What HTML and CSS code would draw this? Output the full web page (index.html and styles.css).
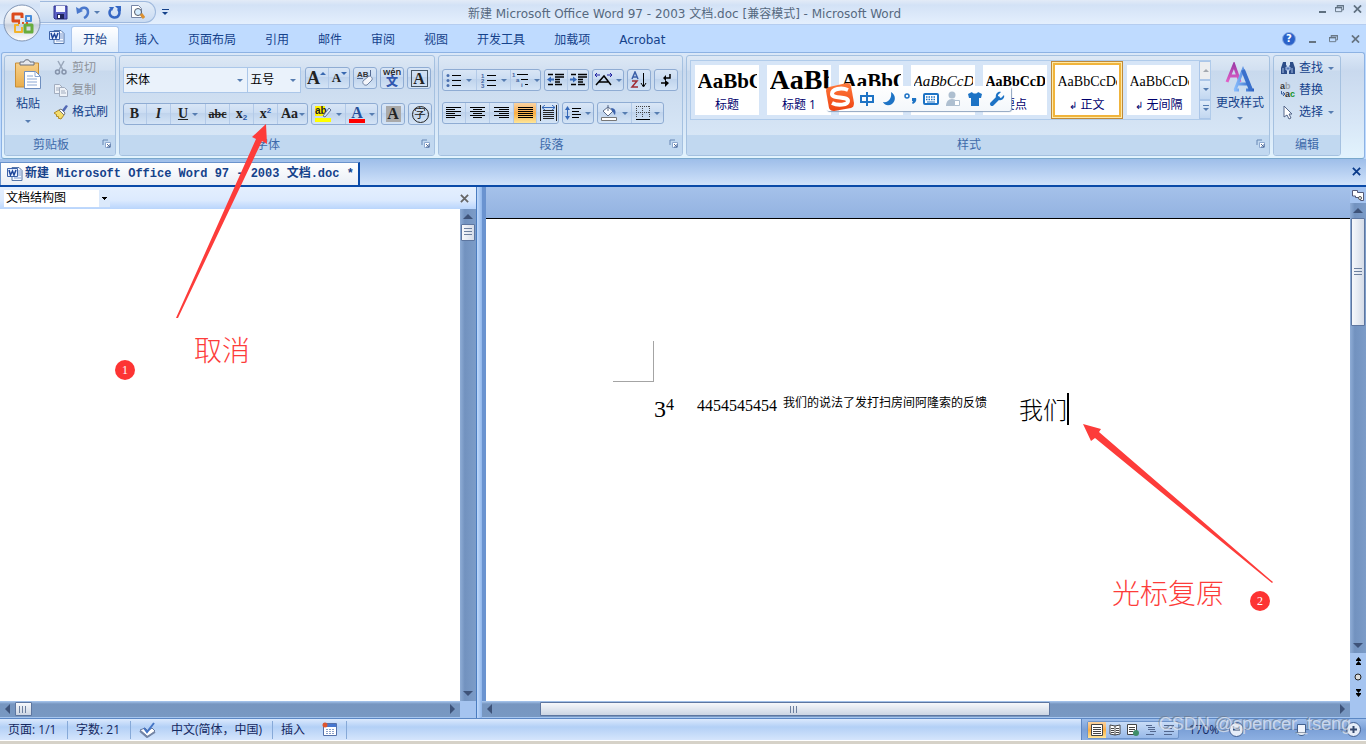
FILE: index.html
```html
<!DOCTYPE html>
<html lang="zh-CN">
<head>
<meta charset="utf-8">
<title>新建 Microsoft Office Word 97 - 2003 文档.doc</title>
<link rel="stylesheet" href="styles.css">
</head>
<body>
<svg class="defs" aria-hidden="true">
<defs>
<linearGradient id="gold" x1="0" y1="0" x2="0" y2="1"><stop offset="0" stop-color="#f7d08a"/><stop offset="1" stop-color="#e9ad4b"/></linearGradient>
<linearGradient id="orb" x1="0" y1="0" x2="0" y2="1"><stop offset="0" stop-color="#fff"/><stop offset=".5" stop-color="#dfe4ec"/><stop offset=".55" stop-color="#c6cfdd"/><stop offset="1" stop-color="#fff"/></linearGradient>
<linearGradient id="sogou" x1="0" y1="0" x2="0" y2="1"><stop offset="0" stop-color="#ff7a3c"/><stop offset="1" stop-color="#ee4312"/></linearGradient>
<linearGradient id="pinkA" x1="0" y1="0" x2="0" y2="1"><stop offset="0" stop-color="#a03ca8"/><stop offset="1" stop-color="#e460c8"/></linearGradient>
<linearGradient id="blueA" x1="0" y1="0" x2="1" y2="0"><stop offset="0" stop-color="#8cc0ff"/><stop offset="1" stop-color="#2a5fc0"/></linearGradient>
</defs>
<symbol id="launch" viewBox="0 0 9 9"><path d="M1 6V1h5" fill="none" stroke="#6787b4"/><path d="M3.500 3.500h5v5h-5z" fill="#fff" stroke="#8ea9cf"/><path d="M5 5l3 3M8 5v3H5" stroke="#4e6d9c" fill="none"/></symbol>
<symbol id="worddoc" viewBox="0 0 16 16"><path d="M5 1.500h7l3 3v10H5z" fill="#f4f8ff" stroke="#5676a8"/><path d="M11 5h3M11 7h3M11 9h3M7 12h7" stroke="#7c9bd0"/><path d="M.5 2.500h10v8H.5z" fill="#e8f0ff" stroke="#3c62a8"/><path d="M2 4l1.500 5L5.500 5 7 9l2-5" fill="none" stroke="#1d4599" stroke-width="1.500"/></symbol>
<symbol id="restore" viewBox="0 0 10 9"><path d="M2.500 3V.5h7v5H7.500M.5 3h7v4.500h-7z" fill="none" stroke="currentColor"/><path d="M0 3h8M2 1h8" stroke="currentColor" stroke-width="1.500"/></symbol>
<symbol id="close" viewBox="0 0 10 9"><path d="M1 .5l8 8M9 .5l-8 8" stroke="currentColor" stroke-width="2" fill="none"/></symbol>
<symbol id="al" viewBox="0 0 15 12"><path d="M0 .5h15M0 2.500h9M0 4.500h15M0 6.500h9M0 8.500h15M0 10.500h9" stroke="#000"/></symbol>
<symbol id="ac" viewBox="0 0 15 12"><path d="M0 .5h15M3 2.500h9M0 4.500h15M3 6.500h9M0 8.500h15M3 10.500h9" stroke="#000"/></symbol>
<symbol id="ar" viewBox="0 0 15 12"><path d="M0 .5h15M5 2.500h10M0 4.500h15M5 6.500h10M0 8.500h15M5 10.500h10" stroke="#000"/></symbol>
<symbol id="aj" viewBox="0 0 15 12"><path d="M0 .5h15M0 2.500h15M0 4.500h15M0 6.500h15M0 8.500h15M0 10.500h15" stroke="#000"/></symbol>
</svg>

<div class="app">
<header class="titlebar">
  <div class="qat">
    <button class="ic" aria-label="保存"><svg width="15" height="15" viewBox="0 0 15 15"><path d="M1 1h13v13H2l-1-1z" fill="#5a5fc4" stroke="#2f328c"/><path d="M3 1h9v6H3z" fill="#f4f6ff"/><path d="M4 9h7v5H4z" fill="#20245c"/><path d="M5 10h2v3H5z" fill="#fff"/></svg></button>
    <button class="ic undo" aria-label="撤销"><svg width="14" height="14" viewBox="0 0 14 14"><path d="M3 6c3-5 9-4 9 1 0 3-2 5-4 6" fill="none" stroke="#4a78cc" stroke-width="2.500"/><path d="M0 2l1 7 6-3z" fill="#4a78cc"/></svg><i class="dd"></i></button>
    <button class="ic" aria-label="重复"><svg width="14" height="14" viewBox="0 0 14 14"><path d="M3 4c-3 4-1 8 3 8.500 5 .5 7-5 4-8.500" fill="none" stroke="#3567c4" stroke-width="2.500"/><path d="M7 1h6v6z" fill="#3567c4"/><path d="M1 2h5L4 6z" fill="#3567c4"/></svg></button>
    <button class="ic" aria-label="打印预览"><svg width="15" height="16" viewBox="0 0 15 16"><path d="M1.500 1.500h7l3 3v9h-10z" fill="#fff" stroke="#7685a5"/><circle cx="8" cy="8" r="3.500" fill="#d4ecff" stroke="#555b68"/><path d="M11 10l3 4" stroke="#dc9130" stroke-width="3"/></svg></button>
  </div>
  <button class="qatmore" aria-label="自定义"><i></i></button>
  <h1>新建 Microsoft Office Word 97 - 2003 文档.doc [兼容模式] - Microsoft Word</h1>
  <div class="winbtns"><button aria-label="最小化"><i class="min"></i></button><button aria-label="还原"><svg width="9" height="8"><use href="#restore"/></svg></button><button aria-label="关闭"><svg width="9" height="8"><use href="#close"/></svg></button></div>
</header>

<nav class="tabs">
  <svg class="tabword" width="16" height="16"><use href="#worddoc"/></svg>
  <a href="#" class="tab on">开始</a><a href="#" class="tab">插入</a><a href="#" class="tab">页面布局</a><a href="#" class="tab">引用</a><a href="#" class="tab">邮件</a><a href="#" class="tab">审阅</a><a href="#" class="tab">视图</a><a href="#" class="tab">开发工具</a><a href="#" class="tab">加载项</a><a href="#" class="tab">Acrobat</a>
  <div class="winbtns docbtns"><button class="help" aria-label="帮助">?</button><button aria-label="最小化"><i class="min"></i></button><button aria-label="还原"><svg width="9" height="8"><use href="#restore"/></svg></button><button aria-label="关闭"><svg width="9" height="8"><use href="#close"/></svg></button></div>
</nav>

<button class="orb" aria-label="Office 按钮"><svg width="40" height="40" viewBox="0 0 40 40"><circle cx="20" cy="20" r="18" fill="url(#orb)" stroke="#8095b5"/><g fill="none" stroke-width="3" stroke-linejoin="round"><path d="M18 18h-7v-7h9v4" stroke="#dc4a1c"/><path d="M23 18h6v-5h-5v4" stroke="#4a8edb" stroke-width="2"/><path d="M17 22h-4v7h7v-5" stroke="#f3b32c" stroke-width="2"/><path d="M23 22h7v7h-7z" stroke="#67ac3c"/></g><path d="M16 20h2M20 20h2M24 20h2" stroke="#d95a25" stroke-width="2"/></svg></button>

<main class="ribbon">
  <section class="group clip"><div class="body">
    <button class="big paste"><svg width="30" height="32" viewBox="0 0 30 32"><path d="M2.500 4h23v24h-23z" fill="url(#gold)" stroke="#c98e35"/><path d="M7 6V3h4c0-3 6-3 6 0h4v3z" fill="#e6e8ec" stroke="#6a6f7b"/><path d="M11.500 12.500h11l5 5v12h-16z" fill="#fff" stroke="#6f8fbf"/><path d="M22 12.500v5h5M14 17h6M14 20h10M14 23h10M14 26h10" fill="none" stroke="#8ca8d4"/></svg><span>粘贴</span><i class="dd"></i></button>
    <div class="stack">
      <button class="row off"><svg width="16" height="16" viewBox="0 0 16 16"><path d="M5 1l5 9M11 1L6 10" stroke="#9aa7ba" stroke-width="1.500"/><circle cx="4.500" cy="12" r="2" fill="none" stroke="#8593ab" stroke-width="1.500"/><circle cx="11" cy="12" r="2" fill="none" stroke="#8593ab" stroke-width="1.500"/></svg>剪切</button>
      <button class="row off"><svg width="16" height="16" viewBox="0 0 16 16"><path d="M1.500 2.500h5l3 3v6h-8z" fill="#eef2f8" stroke="#a2adbf"/><path d="M6.500 5.500h5l3 3v6h-8z" fill="#eef2f8" stroke="#a2adbf"/><path d="M8 9h4M8 11h5M3 6h3M3 8h3" stroke="#a2adbf"/></svg>复制</button>
      <button class="row"><svg width="16" height="16" viewBox="0 0 16 16"><path d="M1 9l5-3 5 5-3 4-3-1 1-1-3-1 1-1z" fill="#f3dc6c" stroke="#b08a28"/><path d="M6 6l2-1 4 4-1 2z" fill="#fff" stroke="#777"/><path d="M9 6l4-5 2 1-4 6z" fill="#5268b4"/></svg>格式刷</button>
    </div></div>
    <footer class="has"><span>剪贴板</span><button aria-label="剪贴板选项"><svg width="9" height="9"><use href="#launch"/></svg></button></footer>
  </section>

  <section class="group font"><div class="body">
    <div class="line">
      <span class="combo face"><select aria-label="字体"><option>宋体</option></select></span><span class="combo size"><select aria-label="字号"><option>五号</option></select></span>
      <div class="set gap1"><button class="w23 s1" aria-label="增大字体"><b class="grow">A</b><svg width="6" height="14" viewBox="0 0 6 14"><path d="M0 4l3-3 3 3z" fill="#3868b0"/></svg></button><button class="w22 s1" aria-label="缩小字体"><b class="shr">A</b><svg width="6" height="14" viewBox="0 0 6 14"><path d="M0 1l3 3 3-3z" fill="#3868b0"/></svg></button></div>
      <div class="set"><button class="w24" aria-label="清除格式"><svg width="18" height="18" viewBox="0 0 18 18"><text x="1" y="8" class="tiny">AB</text><path d="M1 9.500h6M14.500 1v6" stroke="#556b94"/><path d="M7 12l6-5c2 0 4 2 3 4l-5 5c-3 1-5-2-4-4z" fill="#f4f6fb" stroke="#7083a3"/></svg></button></div>
      <div class="set"><button class="w24 pin" aria-label="拼音指南"><span>wén</span><b>文</b></button></div>
      <div class="set"><button class="w24" aria-label="字符边框"><b class="boxed">A</b></button></div>
    </div>
    <div class="line l2">
      <div class="set"><button class="w23 ser"><b>B</b></button><button class="w24 ser"><em>I</em></button><button class="w35 ser"><u>U</u><i class="dd"></i></button><button class="w24 ser abc"><s>abc</s></button><button class="w24 ser"><b>x<sub>2</sub></b></button><button class="w24 ser"><b>x<sup>2</sup></b></button><button class="w31 ser aa">Aa<i class="dd"></i></button></div>
      <div class="set"><button class="w34" aria-label="突出显示"><svg width="18" height="18" viewBox="0 0 18 18"><path d="M1 1h10v10H1z" fill="#fff200"/><text x="1" y="9" class="ab">ab</text><path d="M9 11l6-8 2 2-6 7z" fill="#dce8f8" stroke="#5e7398"/><path d="M1 13h16v4H1z" fill="#ff0"/></svg><i class="dd"></i></button><button class="w33 fcol" aria-label="字体颜色"><b>A</b><i class="dd"></i></button></div>
      <div class="set"><button class="w24" aria-label="字符底纹"><b class="shade">A</b></button></div>
      <div class="set"><button class="w24" aria-label="带圈字符"><span class="circ">字</span></button></div>
    </div></div>
    <footer class="has"><span>字体</span><button aria-label="字体选项"><svg width="9" height="9"><use href="#launch"/></svg></button></footer>
  </section>

  <section class="group para"><div class="body">
    <div class="line">
      <div class="set"><button class="w34" aria-label="项目符号"><svg width="16" height="15" viewBox="0 0 16 15"><path d="M6 2.500h9M6 7.500h9M6 12.500h9" stroke="#000"/><g fill="#4a6fae"><circle cx="2" cy="2.500" r="1.500"/><circle cx="2" cy="7.500" r="1.500"/><circle cx="2" cy="12.500" r="1.500"/></g></svg><i class="dd"></i></button><button class="w34" aria-label="编号"><svg width="16" height="15" viewBox="0 0 16 15"><path d="M6 2.500h9M6 7.500h9M6 12.500h9" stroke="#000"/><text x="0" y="5" class="num6">1</text><text x="0" y="10" class="num6">2</text><text x="0" y="15" class="num6">3</text></svg><i class="dd"></i></button><button class="w31" aria-label="多级列表"><svg width="18" height="16" viewBox="0 0 18 16"><path d="M5 2.500h11M9 7.500h7M13 12.500h3" stroke="#000"/><text x="0" y="5" class="num6">1</text><text x="4" y="10" class="num6">a</text><text x="9" y="15" class="num6">i</text></svg><i class="dd"></i></button></div>
      <div class="set"><button class="w23" aria-label="减少缩进"><svg width="17" height="14" viewBox="0 0 17 14"><path d="M1 1.500h5M8 1.500h9M8 4h9M8 6.500h5M8 9h5M1 11.500h5M8 11.500h7" stroke="#000" stroke-width="1.500"/><path d="M0 6.500l4-3v2h3v2H4v2z" fill="#3568b8"/></svg></button><button class="w22" aria-label="增加缩进"><svg width="17" height="14" viewBox="0 0 17 14"><path d="M1 1.500h5M8 1.500h9M8 4h9M8 6.500h5M8 9h5M1 11.500h5M8 11.500h7" stroke="#000" stroke-width="1.500"/><path d="M7 6.500l-4-3v2H0v2h3v2z" fill="#3568b8"/></svg></button></div>
      <div class="set"><button class="w32" aria-label="中文版式"><svg width="17" height="16" viewBox="0 0 17 16"><path d="M1 13l8-9 7 9M4 10h9" stroke="#000" stroke-width="1.500" fill="none"/><path d="M0 3h5M2 1l-2 2 2 2M17 3h-5M15 1l2 2-2 2" fill="none" stroke="#2020a0"/></svg><i class="dd"></i></button></div>
      <div class="set"><button class="w24" aria-label="排序"><svg width="18" height="18" viewBox="0 0 18 18"><path d="M2 8l3-7 3 7M3 6h4" fill="none" stroke="#3c60a8" stroke-width="1.500"/><path d="M2 10h5l-5 6h6" fill="none" stroke="#a02c34" stroke-width="1.500"/><path d="M13.500 2v13M11 12l2.500 4 2.500-4" fill="none" stroke="#000"/></svg></button></div>
      <div class="set"><button class="w24" aria-label="显示编辑标记"><svg width="14" height="16" viewBox="0 0 14 16"><path d="M11 2v4H5M2 11h7" stroke="#000" stroke-width="1.500" fill="none"/><path d="M7 3L4 6l3 3zM6 8l4 3-4 4z"/></svg></button></div>
    </div>
    <div class="line l2">
      <div class="set"><button class="w23" aria-label="左对齐"><svg width="15" height="12"><use href="#al"/></svg></button><button class="w24" aria-label="居中"><svg width="15" height="12"><use href="#ac"/></svg></button><button class="w24" aria-label="右对齐"><svg width="15" height="12"><use href="#ar"/></svg></button><button class="w23 lit" aria-label="两端对齐"><svg width="15" height="12"><use href="#aj"/></svg></button><button class="w23" aria-label="分散对齐"><svg width="17" height="16" viewBox="0 0 17 16"><path d="M.5 0v16M16.500 0v16M3 5.500h11M3 7.500h11M3 9.500h11M3 11.500h11M3 13.500h11" stroke="#222"/><path d="M2 2.500h13M5 0L2 2.500 5 5M12 0l3 2.500L12 5" stroke="#3568b8" fill="none"/></svg></button></div>
      <div class="set"><button class="w32" aria-label="行距"><svg width="16" height="16" viewBox="0 0 16 16"><path d="M7 3.500h9M7 6.500h7M7 9.500h9M7 12.500h7" stroke="#000"/><path d="M0 5l2.500-4L5 5zM0 11l2.500 4L5 11z" fill="#3568b8"/><path d="M2.500 4v8" stroke="#3568b8"/></svg><i class="dd"></i></button></div>
      <div class="set"><button class="w34" aria-label="底纹"><svg width="18" height="16" viewBox="0 0 18 16"><path d="M3 6l5-4 5 4-5 5z" fill="#fff" stroke="#5a6a88"/><path d="M8 0v6" stroke="#5a6a88"/><path d="M11 3c5 0 5 4 4 7-2-1-1-3-3-4z" fill="#3c62ac"/><path d="M1.500 12.500h15v3h-15z" fill="#fff" stroke="#777"/></svg><i class="dd"></i></button><button class="w33" aria-label="边框"><svg width="14" height="14" viewBox="0 0 14 14"><path d="M.5 0v12M6.500 0v12M13.500 0v12M0 .5h14M0 6.500h14" stroke="#444" stroke-dasharray="1 1"/><path d="M0 13.500h14" stroke="#000"/></svg><i class="dd"></i></button></div>
    </div></div>
    <footer class="has"><span>段落</span><button aria-label="段落选项"><svg width="9" height="9"><use href="#launch"/></svg></button></footer>
  </section>

  <section class="group styles"><div class="body">
    <div class="gallery">
      <button class="tile"><span class="smp h20">AaBbCc</span><span>标题</span></button>
      <button class="tile"><span class="smp h27">AaBbC</span><span>标题 1</span></button>
      <button class="tile"><span class="smp h20">AaBbCc</span><span>副标题</span></button>
      <button class="tile"><span class="smp it">AaBbCcDd</span><span>强调</span></button>
      <button class="tile"><span class="smp bd">AaBbCcD</span><span>要点</span></button>
      <button class="tile sel"><span class="smp">AaBbCcDd</span><span><small>↲</small> 正文</span></button>
      <button class="tile"><span class="smp">AaBbCcDd</span><span><small>↲</small> 无间隔</span></button>
      <div class="gscroll"><button class="dis" aria-label="上一行"><i class="up"></i></button><button aria-label="下一行"><i class="dd"></i></button><button aria-label="更多"><i class="dd more"></i></button></div>
    </div>
    <button class="big change"><svg width="30" height="30" viewBox="0 0 30 30"><path d="M2 20L9 3l6 17M4 14h8" fill="none" stroke="url(#pinkA)" stroke-width="3"/><path d="M9 28h5M10 28L18 8l8 20M21 28h8M13 22h9" fill="none" stroke="url(#blueA)" stroke-width="3"/><path d="M18 8l8 20" stroke="#3a70cc" stroke-width="4"/></svg><span>更改样式</span><i class="dd"></i></button></div>
    <footer class="has"><span>样式</span><button aria-label="样式选项"><svg width="9" height="9"><use href="#launch"/></svg></button></footer>
  </section>

  <section class="group edit"><div class="body"><div class="stack">
      <button class="row"><svg width="16" height="16" viewBox="0 0 16 16"><path d="M3 2h3v3l1 1v8H1V8zM10 2h3l2 6v6H9V6l1-1z" fill="#2d4d88"/><path d="M6 7h4v3H6zM3 8v5M12 8v5" fill="#5878b4" stroke="#a9c0e6"/></svg>查找<i class="dd"></i></button>
      <button class="row"><svg width="16" height="16" viewBox="0 0 16 16"><text x="0" y="7" class="rp">a<tspan class="g">b</tspan></text><text x="5" y="15" class="rp">a<tspan class="gr">c</tspan></text><path d="M1.500 9v3H5M3 10l2 2-2 2" fill="none" stroke="#3a5f9f"/></svg>替换</button>
      <button class="row"><svg width="16" height="16" viewBox="0 0 16 16"><path d="M4 2v11l3-2 2 4 2-1-2-4h3z" fill="#fff" stroke="#54668a"/></svg>选择<i class="dd"></i></button>
    </div></div>
    <footer><span>编辑</span></footer>
  </section>
</main>

<div class="doctabs"><a href="#" class="doctab"><svg width="16" height="16"><use href="#worddoc"/></svg>新建 Microsoft Office Word 97 - 2003 文档.doc *</a><button aria-label="关闭文档"><svg width="9" height="9"><use href="#close"/></svg></button></div>

<div class="work">
  <aside class="map">
    <div class="maphead"><span class="mapsel"><select aria-label="窗格"><option>文档结构图</option></select></span><button aria-label="关闭窗格"><svg width="9" height="9"><use href="#close"/></svg></button></div>
    <div class="mapbody"><div class="blank"></div><div class="vs"><i class="t up"></i><b class="thumb"></b><i class="t down"></i></div></div>
    <div class="hs"><i class="t left"></i><b class="thumb tsm"></b><i class="t right"></i><span class="corner"></span></div>
  </aside>
  <div class="split"></div>
  <section class="doc">
    <div class="docmain">
      <div class="canvas"><article class="page"><div class="mark"></div><p class="text"><span class="n">3<sup>4</sup></span><span class="num">4454545454</span><span class="small">我们的说法了发打扫房间阿隆索的反馈</span><span class="end">我们</span></p></article></div>
      <div class="side"><button class="ruler" aria-label="标尺"><svg width="14" height="13" viewBox="0 0 14 13"><path d="M1.500 1.500h5v2h6v8h-3v-3h-5V7h-3z" fill="#fff" stroke="#555b7a"/><circle cx="9" cy="9" r="1.500" fill="#fff" stroke="#555"/></svg></button>
      <div class="vs"><i class="t up"></i><b class="thumb tall"></b><i class="t down"></i></div>
      <div class="browse"><button aria-label="上一页"><svg width="7" height="8" viewBox="0 0 7 8"><path d="M1 3l2.500-3L6 3zM1 7l2.500-3L6 7z"/><path d="M1 3.500h5M1 7.500h5" stroke="#000"/></svg></button><button aria-label="选择浏览对象"><svg width="8" height="8" viewBox="0 0 8 8"><circle cx="4" cy="4" r="3" fill="#ddd" stroke="#222"/></svg></button><button aria-label="下一页"><svg width="7" height="8" viewBox="0 0 7 8"><path d="M1 1h5L3.500 4zM1 5h5L3.500 8z"/><path d="M1 .5h5M1 4.500h5" stroke="#000"/></svg></button></div></div>
    </div>
    <div class="hs"><i class="t left"></i><b class="thumb twide"></b><i class="t right"></i><span class="corner"></span></div>
  </section>
</div>

<footer class="status">
  <span class="c1">页面: 1/1</span><span class="c2">字数: 21</span><span class="c3"><svg width="17" height="16" viewBox="0 0 17 16"><path d="M1 8l5-2 3 3 4-3 3 3-7 6z" fill="#fff" stroke="#66789d"/><path d="M1 9l7 6 8-5" fill="none" stroke="#7485a5" stroke-width="2"/><path d="M5 6l3 4 7-9" fill="none" stroke="#4474c4" stroke-width="2"/></svg></span><span class="c4">中文(简体，中国)</span><span class="c5">插入<svg width="16" height="15" viewBox="0 0 16 15"><path d="M1.500 1.500h13v12h-13z" fill="#fff" stroke="#5470a8"/><path d="M2 2h12v3H2z" fill="#4676d0"/><path d="M4 7.500h9M4 9.500h9M4 11.500h9" stroke="#8ba0c8" stroke-dasharray="2 1"/><circle cx="3" cy="3" r="2.500" fill="#dc5530"/></svg></span>
  <div class="zoombar">
    <div class="views"><button class="lit" aria-label="页面视图"><svg width="12" height="12" viewBox="0 0 12 12"><path d="M.5.5h11v11H.5z" fill="#fff" stroke="#444"/><path d="M2 3.500h8M2 5.500h8M2 7.500h8M2 9.500h8" stroke="#444"/></svg></button><button aria-label="阅读版式"><svg width="12" height="12" viewBox="0 0 12 12"><path d="M1 1l5 1 5-1v9l-5 1-5-1zM6 2v9" fill="#fff" stroke="#444"/><path d="M2 4.500h3M2 6.500h3M7 4.500h3M7 6.500h3M2 8.500h3M7 8.500h3" stroke="#444"/></svg></button><button aria-label="Web 版式"><svg width="12" height="12" viewBox="0 0 12 12"><path d="M.5.5h9v10h-9z" fill="#fff" stroke="#444"/><path d="M2 3.500h6M2 5.500h6M2 7.500h4" stroke="#444"/><circle cx="9" cy="9" r="3" fill="#3f8e68"/></svg></button><button aria-label="大纲"><svg width="12" height="12" viewBox="0 0 12 12"><path d="M1 1.500h6M3 3.500h7M3 5.500h7M5 7.500h6M1 10.500h8" stroke="#52678e"/></svg></button><button aria-label="草稿"><svg width="12" height="12" viewBox="0 0 12 12"><path d="M1 1.500h10M1 4.500h8M1 7.500h10M1 10.500h8" stroke="#52678e"/></svg></button></div>
    <span class="pct">170%</span><button class="zb" aria-label="缩小"><svg width="13" height="13" viewBox="0 0 13 13"><path d="M3 6.500h7" stroke="#34496f" stroke-width="2"/></svg></button><input type="range" aria-label="显示比例" min="0" max="100" value="57"><button class="zb" aria-label="放大"><svg width="13" height="13" viewBox="0 0 13 13"><path d="M3 6.500h7M6.500 3v7" stroke="#34496f" stroke-width="2"/></svg></button>
  </div>
</footer>
<div class="edge"></div>

<div class="ime"><svg class="slogo" width="30" height="30" viewBox="0 0 30 30"><path d="M4 5l18-4q3 0 4 3l3 17q0 4-3 5L9 29q-4 0-5-3L1 9q0-3 3-4z" fill="url(#sogou)"/><path d="M23 8C16 5 7 7 7 12c0 5 16 2 16 7 0 4-10 5-16 2" fill="none" stroke="#fff" stroke-width="4"/></svg>
  <svg width="16" height="16" viewBox="0 0 16 16"><path d="M2 5h12v6H2zM8 1v14" fill="none" stroke="#1d73c5" stroke-width="2"/></svg>
  <svg width="16" height="16" viewBox="0 0 16 16"><path d="M10 1c5 3 5 9 1 12-3 2-7 2-9-2 6 1 9-4 8-10z" fill="#1d73c5"/></svg>
  <svg width="14" height="16" viewBox="0 0 14 16"><circle cx="4" cy="5" r="2" fill="none" stroke="#1d73c5" stroke-width="1.500"/><path d="M9 7h4c1 3-1 5-3 6l-1-1 1-2H9z" fill="#1d73c5"/></svg>
  <svg width="16" height="14" viewBox="0 0 16 14"><rect x="1" y="2" width="14" height="10" rx="1" fill="#fff" stroke="#1d73c5" stroke-width="2"/><path d="M3 5h10M3 7.500h10" stroke="#1d73c5" stroke-width="1.500" stroke-dasharray="1.500 1"/><path d="M4 10h8" stroke="#1d73c5"/></svg>
  <svg width="16" height="16" viewBox="0 0 16 16"><circle cx="7" cy="4" r="3.500" fill="#aebfd0"/><path d="M1 15c0-4 2-7 6-7s6 3 6 7z" fill="#aebfd0"/><path d="M9.500 9.500h5v5h-5z" fill="#fff" stroke="#aebfd0"/></svg>
  <svg width="16" height="16" viewBox="0 0 16 16"><path d="M1 3l4-2c1 2 5 2 6 0l4 2-1 4h-2v8H4V7H2z" fill="#1d73c5"/></svg>
  <svg width="16" height="16" viewBox="0 0 16 16"><path d="M3 13l6-6" stroke="#1d73c5" stroke-width="4" stroke-linecap="round"/><path d="M12 1C9 0 6 3 7 7l3 2c3 1 6-2 5-5l-3 3-3-1V4z" fill="#1d73c5"/></svg>
</div>

<svg class="arrows" aria-hidden="true"><path d="M266 124L252 137 256 139 176 318 178 318 262 141 267 144z"/><path d="M1083 424L1091 441 1095 438 1272 583 1273 582 1099 432 1101 429z"/></svg>
<span class="note n1">取消</span><span class="dot d1">1</span><span class="note n2">光标复原</span><span class="dot d2">2</span>
<span class="mark2">CSDN @spencer_tseng</span>
</div>
</body>
</html>
```
FILE: styles.css
```css
* { box-sizing: border-box; }
body { margin: 0; font: 12px/16px "Open Sans", "Noto Sans CJK SC", sans-serif; color: #15428b; overflow: hidden; }
button, select, input { font: inherit; color: inherit; margin: 0; padding: 0; border: 0; background: none; border-radius: 0; }
a { color: inherit; text-decoration: none; }
svg { display: block; flex: none; }
.defs { position: absolute; width: 0; height: 0; }
.app { position: relative; display: flex; flex-direction: column; height: 100vh; background: #bfdbff; }

.titlebar { display: flex; align-items: center; height: 25px; flex: none; padding: 0 4px 0 40px; background: linear-gradient(#e3ebf7 0, #d3e2f6 5px, #e4effd 100%); border-bottom: 1px solid #b5cdf0; }
.qat { display: flex; align-items: center; gap: 8px; height: 22px; width: 116px; padding-left: 13px; background: linear-gradient(#e4edf8, #c9dbf2); border: 1px solid #9fb9dd; border-left: 0; border-radius: 0 11px 11px 0; }
.ic { display: flex; align-items: center; gap: 4px; }
.dd { display: block; flex: none; width: 0; border: 3px solid transparent; border-top-color: #567db1; border-bottom: 0; }
.qatmore { width: 10px; margin-left: 4px; }
.qatmore i { display: block; width: 7px; height: 6px; margin: 0 auto; border-top: 1px solid #15428b; }
.qatmore i::after { content: ""; display: block; margin-top: 2px; width: 0; border: 3px solid transparent; border-top-color: #15428b; border-bottom: 0; }
h1 { flex: 1; margin: 0; text-align: center; font: 400 12px/16px "DejaVu Sans", "Noto Sans CJK SC", sans-serif; color: #56697f; padding: 3px 120px 0 0; white-space: nowrap; }
.winbtns { display: flex; align-items: center; gap: 9px; padding-bottom: 6px; color: #5f7080; }
.min { display: block; width: 7px; height: 2px; background: currentColor; margin-top: 6px; }

.tabs { display: flex; align-items: flex-end; height: 27px; flex: none; padding: 0 6px 0 49px; font-family: "DejaVu Sans", "Noto Sans CJK SC", sans-serif; }
.tabword { margin: 0 6px 7px 0; }
.tab { padding: 5px 14px 4px; line-height: 16px; margin-right: 1px; }
.tab.on { padding: 5px 11px 4px; margin-right: 2px; border: 1px solid #a9c5ec; border-bottom: 0; border-radius: 3px 3px 0 0; background: linear-gradient(#fff, #dfecfb); }
.docbtns { margin: 0 0 6px auto; padding: 0; gap: 13px; color: #667380; }
.help { width: 14px; height: 14px; border-radius: 7px; background: #2b62c9; color: #fff; font-size: 10px; line-height: 12px; font-weight: 700; border: 1px solid #8daee4; }
.orb { position: absolute; left: 2px; top: 3px; }

.ribbon { display: flex; gap: 3px; height: 107px; flex: none; margin: 0 1px; padding: 2px; border: 1px solid #8db2e3; border-radius: 3px; background: linear-gradient(#dbe8f8 0, #c9d9ee 18px, #d8e7f7 70px, #e2f3fd 100%); border-bottom-color: #79a8cc; }
.group { display: flex; flex: none; flex-direction: column; border: 1px solid #a5c1e0; border-radius: 3px; background: linear-gradient(#dde8f5 0, #d2e0f1 14px, #c8d9ed 15px, #d7e6f6 80px); }
.group .body { flex: 1; display: flex; padding: 0 3px; min-height: 0; }
.group footer { position: relative; height: 20px; flex: none; background: #c1d8f0; text-align: center; line-height: 20px; color: #3e6aaa; border-radius: 0 0 2px 2px; }
.group footer.has { padding-right: 18px; }
.group footer button { position: absolute; right: 4px; top: 4px; }
.clip { width: 112px; } .font { width: 316px; } .para { width: 245px; } .edit { width: 68px; margin-right: 21px; }
.group.styles { flex: 1; min-width: 0; }
.font .body, .para .body { flex-direction: column; }
.big { display: flex; flex-direction: column; align-items: center; line-height: 16px; }
.paste { width: 40px; flex: none; padding-top: 3px; gap: 5px; }
.paste .dd, .change .dd { margin-top: 3px; }
.stack { display: flex; flex-direction: column; gap: 4px; padding: 3px 0 0 5px; }
.row { display: flex; align-items: center; gap: 3px; height: 18px; white-space: nowrap; }
.row .dd { margin-left: 2px; }
.off { color: #8d9299; }
.line { display: flex; gap: 3px; padding-top: 11px; height: 47px; flex: none; align-items: flex-start; }
.para .line { padding-top: 13px; height: 46px; }
.group .l2 { padding-top: 0; height: 22px; }
.combo, .mapsel { position: relative; display: block; background: #eaf2fb; border: 1px solid #abc7e9; height: 26px; }
.combo select, .mapsel select { appearance: none; width: 100%; height: 100%; padding-left: 2px; color: #000; outline: 0; }
.combo::after, .mapsel::after { content: ""; position: absolute; right: 4px; top: 11px; border: 3px solid transparent; border-top-color: #567db1; border-bottom: 0; pointer-events: none; }
.face { width: 126px; } .size { width: 54px; margin-left: -4px; }
.gap1 { margin-left: 1px; }
.set { display: flex; height: 22px; border: 1px solid #8facd3; border-radius: 3px; background: linear-gradient(#d9e6f6 0, #cadcf2 45%, #bfd3ec 46%, #d4e4f6 100%); }
.set button { display: flex; align-items: center; justify-content: center; gap: 4px; color: #222; }
.set button + button { border-left: 1px solid #b3cae8; }
.set button:first-child { margin-left: -1px; } .set button:last-child { margin-right: -1px; }
.w22 { width: 22px; } .w23 { width: 23px; } .w24 { width: 24px; } .w31 { width: 31px; } .w32 { width: 32px; } .w33 { width: 33px; } .w34 { width: 34px; } .w35 { width: 35px; }
.ser, .grow, .shr, .boxed, .shade, .fcol b { font-family: "Liberation Serif", serif; font-weight: 700; }
.ser { font-size: 14px; }
.ser sub, .ser sup { font: 700 8px/8px "Liberation Sans", sans-serif; color: #2858a8; }
.ser sub { vertical-align: -2px; } .ser sup { vertical-align: 5px; }
.set .abc { font-size: 12px; } .set .aa { gap: 1px; font-size: 14px; }
.set .s1 { gap: 0; } .grow { font-size: 18px; line-height: 20px; } .shr { font-size: 13px; line-height: 20px; }
.s1 svg { align-self: flex-start; margin-top: 3px; }
.tiny { font: 700 8px "Liberation Sans", sans-serif; fill: #333; }
.num6 { font: 700 6px "Liberation Sans", sans-serif; fill: #4264a0; }
.ab { font: 700 10px "Liberation Sans", sans-serif; fill: #222; }
.rp { font: 700 9px "Liberation Sans", sans-serif; fill: #333; } .g { fill: #9aa0a8; } .gr { fill: #17942a; }
.set .pin { flex-direction: column; gap: 0; font-size: 9px; font-weight: 600; line-height: 8px; } .pin b { font-size: 12px; line-height: 12px; color: #3158b0; }
.boxed { width: 17px; height: 17px; border: 1px solid #456; line-height: 16px; font-size: 16px; }
.shade { width: 15px; height: 16px; background: #a9a9a9; line-height: 16px; font-size: 16px; }
.fcol b { width: 16px; height: 17px; border-bottom: 4px solid #f00; font-size: 16px; line-height: 13px; color: #264f9a; }
.circ { width: 17px; height: 17px; border: 1px solid #222; border-radius: 50%; font-size: 12px; line-height: 14px; }
.lit { background: linear-gradient(#f9d3a2 0, #fbb45c 40%, #f9ae42 50%, #fee69a 100%); }

.gallery { display: flex; gap: 8px; height: 60px; margin: 4px 1px 0 0; padding-left: 4px; border: 1px solid #b0cbea; background: #d6e5f7; flex: 1; align-items: center; min-width: 0; overflow: hidden; }
.tile { width: 64px; height: 50px; flex: none; background: #fff; display: flex; flex-direction: column; align-items: center; color: #00006d; line-height: 18px; }
.tile small { font-size: 10px; }
.smp { width: 59px; height: 31px; overflow: hidden; text-align: left; font: 14px/33px "Liberation Serif", serif; color: #000; white-space: nowrap; }
.h20 { font-size: 21px; font-weight: 700; } .h27 { font-size: 28px; line-height: 29px; font-weight: 700; } .it { font-style: italic; font-size: 15px; } .bd { font-weight: 700; }
.sel { outline: 2px solid #f0b43c; box-shadow: 0 0 0 3px #ffeaa8, 0 0 0 4px #c08a3a; }
.gscroll { display: flex; flex-direction: column; flex: none; margin-left: auto; width: 14px; height: 100%; }
.gscroll button { flex: 1; display: flex; align-items: center; justify-content: center; background: linear-gradient(#e0ecfa, #c2d7f0); border: 1px solid #abc6e8; }
.gscroll .dis { background: #eceef0; }
.gscroll .up { width: 0; border: 3px solid transparent; border-bottom-color: #a4a9b0; border-top: 0; }
.more { position: relative; } .more::before { content: ""; position: absolute; left: -3px; top: -6px; width: 6px; height: 1px; background: #567db1; }
.change { width: 56px; flex: none; padding-top: 6px; gap: 3px; white-space: nowrap; }
.styles .body { padding: 0 1px 0 3px; }
.edit .body { padding: 0; } .edit .stack { padding-left: 6px; }

.doctabs { display: flex; height: 28px; flex: none; align-items: center; background: linear-gradient(#9ebee9, #d0e2fa); border-bottom: 2px solid #0a4aa8; padding: 3px 5px 0 0; }
.doctab { display: flex; align-items: center; gap: 2px; align-self: stretch; width: 360px; flex: none; padding-left: 6px; background: linear-gradient(#fff, #e9eef6); border: 1px solid #6a93cc; border-right: 2px solid #0a4aa8; border-bottom: 0; font: 700 12px/16px "Liberation Mono", "Noto Sans CJK SC", monospace; white-space: nowrap; }
.doctabs button { margin: 0 0 4px auto; color: #0a3a8a; }

.work { flex: 1; display: flex; min-height: 0; }
.map { width: 35%; max-width: 477px; display: flex; flex-direction: column; flex: none; border-right: 1px solid #4a7cc0; }
.maphead { display: flex; justify-content: space-between; align-items: center; height: 22px; flex: none; padding: 0 7px 0 4px; background: linear-gradient(#e4effe 0, #dceafe 60%, #b9d5fc 100%); color: #666; }
.mapsel { width: 106px; height: 17px; background: #fff; border: 0; }
.mapsel::after { top: 0; right: 0; border: 0; width: 11px; height: 17px; background: linear-gradient(#000, #000) center 7px/5px 1px no-repeat, linear-gradient(#000, #000) center 8px/3px 1px no-repeat, linear-gradient(#000, #000) center 9px/1px 1px no-repeat, #dbe9fb; }
.mapbody { flex: 1; display: flex; background: #fff; min-height: 0; }
.blank { flex: 1; }
.vs { display: flex; flex-direction: column; align-items: center; width: 16px; padding: 5px 0; background: linear-gradient(90deg, #8fadd6, #7292bf 30%, #7c9cc8); }
.hs { display: flex; align-items: center; height: 17px; flex: none; padding-left: 5px; background: linear-gradient(#a9c8f0 0, #7796c0 3px, #7898c2 100%); border-bottom: 1px solid #a6c6f0; }
.t { display: block; width: 0; flex: none; border: 5px solid transparent; }
.t.up { border-bottom-color: #3e5379; border-top: 0; } .t.down { border-top-color: #3e5379; border-bottom: 0; margin-top: auto; }
.t.left { border-right-color: #3e5379; border-left: 0; } .t.right { border-left-color: #3e5379; border-right: 0; margin-left: auto; }
.thumb { display: block; flex: none; width: 14px; height: 17px; margin-top: 5px; border: 1px solid #5d76a0; border-radius: 1px; background: repeating-linear-gradient(#6c7f9e 0 1px, transparent 1px 3px) center/8px 9px no-repeat, linear-gradient(90deg, #f6f8fb, #d5dce8); }
.tall { height: 108px; }
.hs .thumb { margin: 0 0 0 5px; width: 17px; height: 14px; background: repeating-linear-gradient(90deg, #6c7f9e 0 1px, transparent 1px 3px) center/9px 7px no-repeat, linear-gradient(#f6f8fb, #ccd5e3); }
.hs .twide { width: 58%; margin-left: 48px; }
.corner { width: 16px; align-self: stretch; margin-left: 5px; background: #a5c4f0; flex: none; }
.split { width: 5px; flex: none; background: linear-gradient(90deg, #c0dafc, #8fb5ea); }
.doc { flex: 1; display: flex; flex-direction: column; min-width: 0; }
.docmain { flex: 1; display: flex; min-height: 0; }
.canvas { flex: 1; padding-top: 31px; background: linear-gradient(#a5c1ea, #92b2e0 32px); border-left: 4px solid #6a93d0; display: flex; }
.page { flex: 1; background: #fff; border-top: 1px solid #000; padding: 122px 0 0 127px; }
.mark { width: 41px; height: 41px; border: solid #a4a4a4; border-width: 0 1px 1px 0; }
.text { display: flex; align-items: flex-start; margin: 11px 0 0 41px; color: #000; white-space: nowrap; }
.n { font: 24px/32px "Liberation Serif", serif; width: 43px; } .n sup { font-size: 16px; line-height: 0; vertical-align: 7px; }
.num { font: 16px/26px "Liberation Serif", serif; width: 86px; }
.small { font: 12px/18px "Noto Sans CJK SC", sans-serif; width: 236px; }
.end { font: 300 24px/31px "Noto Sans CJK SC", sans-serif; border-right: 2px solid #000; height: 32px; }
.side { width: 16px; display: flex; flex-direction: column; background: #a5c4f0; }
.ruler { height: 16px; padding-left: 1px; }
.side .vs { flex: 1; }
.browse { height: 48px; display: flex; flex-direction: column; align-items: center; justify-content: space-around; flex: none; }

.status { display: flex; align-items: center; height: 22px; flex: none; border-top: 1px solid #5b87c4; background: linear-gradient(#dbe9fd 0, #b3d0f6 8px, #d5e5fc 100%); color: #15285f; white-space: nowrap; }
.status > span { height: 18px; line-height: 18px; padding: 0 8px; border-right: 1px solid #86a9d8; flex: none; display: flex; align-items: center; justify-content: space-between; }
.status .c1 { width: 68px; } .status .c2 { width: 63px; } .status .c3 { width: 32px; border: 0; } .status .c4 { width: 110px; } .status .c5 { width: 74px; }
.zoombar { margin-left: auto; display: flex; align-items: center; align-self: stretch; width: 285px; padding: 0 5px; border-left: 1px solid #5f86c0; background: linear-gradient(#9dbdea, #7ba0d7 50%, #8db0e2); }
.views { display: flex; height: 18px; width: 92px; flex: none; border: 1px solid #6d93c9; border-radius: 2px; background: linear-gradient(#c8dcf7, #98b9e8); }
.views button { flex: 1; display: flex; align-items: center; justify-content: center; }
.pct { width: 50px; text-align: center; flex: none; }
.zb { width: 15px; height: 15px; border: 1px solid #3e5c90; border-radius: 8px; background: #e6edf8; flex: none; }
.zoombar input { appearance: none; flex: 1; min-width: 0; height: 16px; background: linear-gradient(#5577ac, #5577ac) center/100% 1px no-repeat; }
.zoombar input::-webkit-slider-thumb { appearance: none; width: 9px; height: 12px; border: 1px solid #42618f; border-radius: 1px 1px 5px 5px; background: #eef3fb; }
.edge { height: 4px; flex: none; background: #d6d2c8; border-top: 1px solid #fff; }

.ime { position: absolute; left: 826px; top: 86px; width: 185px; height: 25px; display: flex; align-items: center; gap: 6px; padding-left: 33px; background: linear-gradient(#fff, #f3f7fb) 24px 0/161px 100% no-repeat; border-radius: 3px; box-shadow: 1px 1px 1px #8fa5c0; }
.slogo { position: absolute; left: -1px; top: -4px; }
.arrows { position: absolute; left: 0; top: 0; width: 100%; height: 100%; pointer-events: none; fill: #fd3c3a; }
.note { position: absolute; font: 300 28px/36px "Noto Sans CJK SC", sans-serif; color: #fd3c3a; }
.n1 { left: 194px; top: 331px; } .n2 { left: 1112px; top: 574px; }
.dot { position: absolute; width: 20px; height: 20px; border-radius: 10px; background: #fd3433; color: #fff; font: 12px/20px "Liberation Serif", serif; text-align: center; }
.d1 { left: 115px; top: 360px; } .d2 { left: 1250px; top: 591px; }
.mark2 { position: absolute; right: 15px; bottom: 8px; font: 18px/24px "Liberation Sans", sans-serif; color: #e4e8ee; text-shadow: -1px -1px 0 #6d7a90; opacity: .7; pointer-events: none; }
```
